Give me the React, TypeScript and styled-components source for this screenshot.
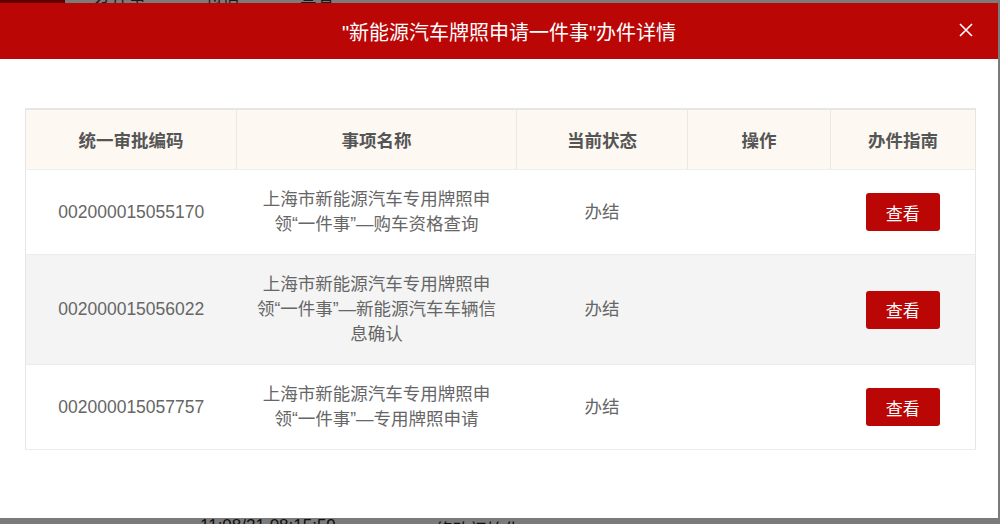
import React from "react";
import styled, { createGlobalStyle } from "styled-components";

const GlobalStyle = createGlobalStyle`
    html, body {
        margin: 0;
        padding: 0;
        height: 100%;
        overflow: hidden;
        background: #f2f2f2;
        font-family: "Liberation Sans", "Noto Sans CJK SC", sans-serif;
    }
`;

interface Row {
    code: string;
    name: string;
    status: string;
}

const rows: Row[] = [
    { code: "002000015055170", name: "上海市新能源汽车专用牌照申领“一件事”—购车资格查询", status: "办结" },
    { code: "002000015056022", name: "上海市新能源汽车专用牌照申领“一件事”—新能源汽车车辆信息确认", status: "办结" },
    { code: "002000015057757", name: "上海市新能源汽车专用牌照申领“一件事”—专用牌照申请", status: "办结" },
];

const Page = styled.div`
    height: 100vh;
    display: flex;
    flex-direction: column;
    justify-content: space-between;
    background: #f6f6f6;
`;

const Tabs = styled.div`
    display: flex;
    align-items: center;
    height: 24px;
    margin-top: -18px;
    font-size: 17px;
    color: #333;
`;

const Tab = styled.div<{ $active?: boolean }>`
    padding: 0 30px;
    height: 100%;
    display: flex;
    align-items: center;
    background: ${p => (p.$active ? "#c50000" : "transparent")};
    color: #333;
`;

const BottomRow = styled.div`
    display: flex;
    gap: 100px;
    padding-left: 200px;
    height: 22px;
    margin-bottom: -14px;
    font-size: 17px;
    color: #222;
`;

const Overlay = styled.div`
    position: fixed;
    inset: 0;
    background: rgba(0, 0, 0, 0.5);
    display: flex;
    align-items: flex-start;
    padding-top: 3px;
`;

const Dialog = styled.div`
    width: 998px;
    height: 515px;
    background: #fff;
    display: flex;
    flex-direction: column;
`;

const Header = styled.header`
    position: relative;
    height: 56px;
    background: #bb0606;
    display: flex;
    align-items: center;
    justify-content: center;
    padding: 0 40px 0 60px;
    color: #fff;
    font-size: 20px;
`;

const CloseButton = styled.button`
    position: absolute;
    right: 24px;
    top: 19px;
    width: 16px;
    height: 16px;
    padding: 0;
    border: none;
    background: transparent;
    cursor: pointer;
    display: flex;
    align-items: center;
    justify-content: center;
`;

const Body = styled.div`
    padding: 49px 23px 0 25px;
`;

const Table = styled.table`
    width: 950px;
    border-collapse: collapse;
    table-layout: fixed;
    border: 1px solid #e6e6e6;
    border-top: 2px solid #e6e6e6;
    font-size: 17.5px;
`;

const HeadCell = styled.th<{ $w: number }>`
    width: ${p => p.$w}px;
    height: 59px;
    padding: 0;
    background: #fdf8f2;
    border-right: 1px solid #e8e8e8;
    border-bottom: 1px solid #eeeeee;
    color: #555;
    font-weight: bold;
    text-align: center;
    &:last-child {
        border-right: none;
    }
`;

const BodyRow = styled.tr<{ $striped?: boolean }>`
    background: ${p => (p.$striped ? "#f4f4f4" : "#fff")};
    border-bottom: 1px solid #ececec;
`;

const Cell = styled.td<{ $wide?: boolean }>`
    padding: 17px ${p => (p.$wide ? "20px" : "10px")};
    line-height: 25px;
    text-align: center;
    vertical-align: middle;
    color: #666;
`;

const ViewButton = styled.button`
    width: 74px;
    height: 38px;
    border: none;
    border-radius: 3px;
    background: #bb0606;
    color: #fff;
    font-family: "Liberation Sans", "Noto Sans CJK SC", sans-serif;
    font-size: 17px;
    cursor: pointer;
`;

const columns = [
    { title: "统一审批编码", w: 210 },
    { title: "事项名称", w: 279 },
    { title: "当前状态", w: 170 },
    { title: "操作", w: 142 },
    { title: "办件指南", w: 144 },
];

export default function App() {
    return (
        <>
            <GlobalStyle />
            <Page>
                <Tabs>
                    <Tab $active>&nbsp;</Tab>
                    <Tab>办件事</Tab>
                    <Tab>待情</Tab>
                    <Tab>查看</Tab>
                </Tabs>
                <BottomRow>
                    <span>11:08/21 08:15:59</span>
                    <span>修改初始化</span>
                </BottomRow>
            </Page>
            <Overlay>
                <Dialog>
                    <Header>
                        <span>"新能源汽车牌照申请一件事"办件详情</span>
                        <CloseButton aria-label="关闭">
                            <svg width="14" height="14" viewBox="0 0 14 14">
                                <path d="M1 1L13 13M13 1L1 13" stroke="#fff" strokeWidth="1.6" />
                            </svg>
                        </CloseButton>
                    </Header>
                    <Body>
                        <Table>
                            <thead>
                                <tr>
                                    {columns.map(c => (
                                        <HeadCell key={c.title} $w={c.w}>{c.title}</HeadCell>
                                    ))}
                                </tr>
                            </thead>
                            <tbody>
                                {rows.map((r, i) => (
                                    <BodyRow key={r.code} $striped={i % 2 === 1}>
                                        <Cell>{r.code}</Cell>
                                        <Cell $wide>{r.name}</Cell>
                                        <Cell>{r.status}</Cell>
                                        <Cell></Cell>
                                        <Cell>
                                            <ViewButton>查看</ViewButton>
                                        </Cell>
                                    </BodyRow>
                                ))}
                            </tbody>
                        </Table>
                    </Body>
                </Dialog>
            </Overlay>
        </>
    );
}
